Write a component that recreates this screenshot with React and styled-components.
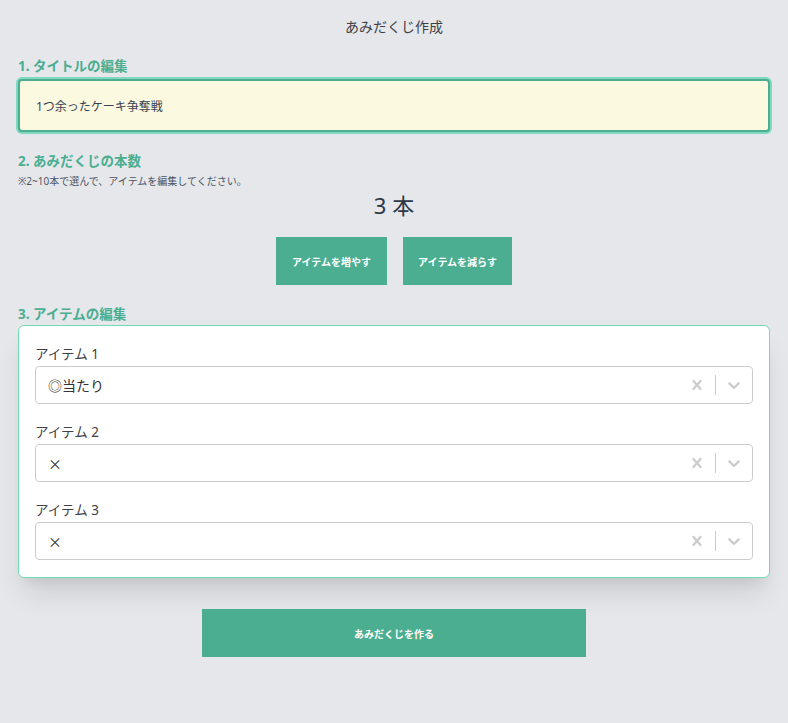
import React, { useState } from 'react';
import styled, { createGlobalStyle } from 'styled-components';

const Global = createGlobalStyle`
  html, body {
    margin: 0;
    padding: 0;
    background: #e5e7eb;
  }
  body {
    font-family: "Noto Sans", "Noto Sans CJK JP", sans-serif;
    color: #374151;
  }
`;

const green = '#4bae91';

const Page = styled.div`
  padding: 16px 18px 40px;
  min-height: 723px;
  box-sizing: border-box;
`;

const PageTitle = styled.h1`
  margin: 0 0 20px;
  text-align: center;
  font-size: 14px;
  font-weight: 400;
  line-height: 22px;
  color: #3f3f46;
`;

const Section = styled.section`
  margin-bottom: ${(p) => p.$mb || 0}px;
`;

const Heading = styled.h2`
  margin: 0;
  font-size: 13.5px;
  font-weight: 700;
  line-height: 16px;
  color: ${green};
`;

const Note = styled.p`
  margin: 5px 0 0;
  font-size: 10px;
  line-height: 14px;
  color: #4b5563;
`;

const TitleInput = styled.input`
  display: block;
  width: 100%;
  box-sizing: border-box;
  height: 53px;
  margin-top: 5px;
  padding: 0 16px;
  background: #fbf9df;
  border: 2px solid ${green};
  border-radius: 4px;
  box-shadow: 0 0 0 2px #7fd8bf;
  font-family: inherit;
  font-size: 12px;
  color: #374151;
  outline: none;
`;

const Count = styled.div`
  text-align: center;
  font-size: 22px;
  line-height: 30px;
  margin-top: 2px;
  color: #2d3748;
`;

const ButtonRow = styled.div`
  display: flex;
  justify-content: center;
  gap: 16px;
  margin-top: 17px;
`;

const GreenButton = styled.button`
  width: ${(p) => p.$w}px;
  height: 48px;
  border: none;
  background: ${green};
  color: #fff;
  font-family: inherit;
  font-size: 10px;
  font-weight: 700;
  cursor: pointer;
`;

const Card = styled.div`
  margin-top: 3px;
  background: #fff;
  border: 1px solid #6fdcb8;
  border-radius: 6px;
  padding: 17px 16px 17px;
  box-shadow: 0 20px 28px -5px rgba(0, 0, 0, 0.11), 0 10px 12px -5px rgba(0, 0, 0, 0.05);
  display: flex;
  flex-direction: column;
  gap: 17px;
`;

const Field = styled.div``;

const Label = styled.div`
  font-size: 13.5px;
  line-height: 22px;
  color: #3f3f46;
  margin-bottom: 1px;
`;

const Select = styled.div`
  display: flex;
  align-items: center;
  height: 38px;
  box-sizing: border-box;
  border: 1px solid #cccccc;
  border-radius: 4px;
  background: #fff;
`;

const Value = styled.div`
  flex: 1;
  padding-left: 12px;
  font-family: "Noto Sans CJK JP", sans-serif;
  font-size: 14px;
  color: #333;
`;

const Indicator = styled.div`
  width: 36px;
  height: 36px;
  display: flex;
  align-items: center;
  justify-content: center;
  color: #cccccc;
`;

const Sep = styled.span`
  width: 1px;
  height: 20px;
  background: #cccccc;
`;

const Footer = styled.div`
  display: flex;
  justify-content: center;
  margin-top: 31px;
`;

const ClearIcon = () => (
  <svg width="20" height="20" viewBox="0 0 20 20" fill="currentColor">
    <path d="M14.348 14.849c-0.469 0.469-1.229 0.469-1.697 0l-2.651-3.030-2.651 3.029c-0.469 0.469-1.229 0.469-1.697 0-0.469-0.469-0.469-1.229 0-1.697l2.758-3.150-2.759-3.152c-0.469-0.469-0.469-1.228 0-1.697s1.228-0.469 1.697 0l2.652 3.031 2.651-3.031c0.469-0.469 1.228-0.469 1.697 0s0.469 1.229 0 1.697l-2.758 3.152 2.758 3.150c0.469 0.469 0.469 1.229 0 1.698z" />
  </svg>
);

const ChevronIcon = () => (
  <svg width="20" height="20" viewBox="0 0 20 20" fill="currentColor">
    <path d="M4.516 7.548c0.436-0.446 1.043-0.481 1.576 0l3.908 3.747 3.908-3.747c0.533-0.481 1.141-0.446 1.574 0 0.436 0.445 0.408 1.197 0 1.615-0.406 0.418-4.695 4.502-4.695 4.502-0.217 0.223-0.502 0.335-0.787 0.335s-0.57-0.112-0.789-0.335c0 0-4.287-4.084-4.695-4.502s-0.436-1.170 0-1.615z" />
  </svg>
);

const ItemSelect = ({ label, value }) => (
  <Field>
    <Label>{label}</Label>
    <Select>
      <Value>{value}</Value>
      <Indicator>
        <ClearIcon />
      </Indicator>
      <Sep />
      <Indicator>
        <ChevronIcon />
      </Indicator>
    </Select>
  </Field>
);

export default function App() {
  const [title, setTitle] = useState('1つ余ったケーキ争奪戦');
  const items = ['◎当たり', '×', '×'];

  return (
    <Page>
      <Global />
      <PageTitle>あみだくじ作成</PageTitle>

      <Section $mb={21}>
        <Heading>1. タイトルの編集</Heading>
        <TitleInput value={title} onChange={(e) => setTitle(e.target.value)} />
      </Section>

      <Section $mb={21}>
        <Heading>2. あみだくじの本数</Heading>
        <Note>※2~10本で選んで、アイテムを編集してください。</Note>
        <Count>{items.length} 本</Count>
        <ButtonRow>
          <GreenButton $w={111}>アイテムを増やす</GreenButton>
          <GreenButton $w={109}>アイテムを減らす</GreenButton>
        </ButtonRow>
      </Section>

      <Section>
        <Heading>3. アイテムの編集</Heading>
        <Card>
          {items.map((v, i) => (
            <ItemSelect key={i} label={`アイテム ${i + 1}`} value={v} />
          ))}
        </Card>
      </Section>

      <Footer>
        <GreenButton $w={384}>あみだくじを作る</GreenButton>
      </Footer>
    </Page>
  );
}
